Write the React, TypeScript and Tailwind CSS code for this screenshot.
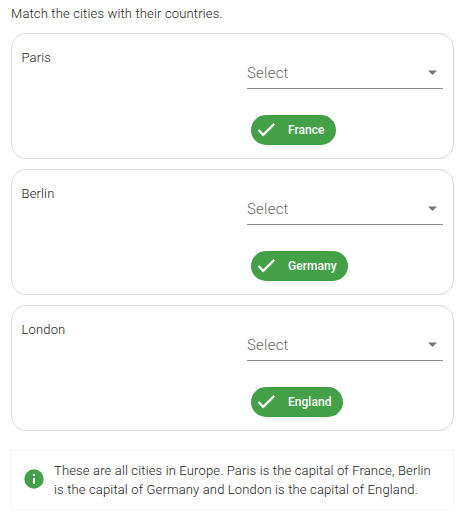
const pairs = [
  { city: "Paris", country: "France", width: "w-[85px]" },
  { city: "Berlin", country: "Germany", width: "w-[97px]" },
  { city: "London", country: "England", width: "w-[92px]" },
];

function MatchCard({ city, country, width }: { city: string; country: string; width: string }) {
  return (
    <section className="flex h-[126px] rounded-[15px] border border-[#dadada] pl-[9.5px] pr-2.5">
      <div className="flex-1 pt-[14px] leading-[19px]">{city}</div>
      <div className="flex w-[196px] flex-col">
        <div className="mt-[21px] flex h-[34px] items-start justify-between border-b border-[#8c8c8c] pr-[6px]">
          <span className="text-[15px] leading-[36px] tracking-[0.22px] text-[#686868]">Select</span>
          <svg className="mt-[15px] h-[5px] w-[9px]" viewBox="0 0 9 5" fill="#757575">
            <path d="M0 .5h9L4.5 5z" />
          </svg>
        </div>
        <div className={`ml-1 mt-[26px] flex h-[30px] items-center rounded-full bg-[#43a047] text-xs font-medium tracking-[0.03px] text-white ${width}`}>
          <svg className="mb-px ml-[4px] size-[23px] shrink-0" viewBox="0 0 24 24" fill="white" stroke="white" strokeWidth="0.5">
            <path d="M8.6 16.17 4.43 12l-1.42 1.41L8.6 19 20.6 7l-1.41-1.41z" />
          </svg>
          <span className="ml-[10px]">{country}</span>
        </div>
      </div>
    </section>
  );
}

export default function App() {
  return (
    <main className="h-[524px] w-[461px] bg-white pl-[11px] pr-[7px] font-['Roboto',sans-serif] text-[13px] font-light tracking-[0.155px] text-[#1a1a1a]">
      <p className="h-[33px] pt-1 leading-[19px]">Match the cities with their countries.</p>
      <div className="flex flex-col gap-2.5">
        {pairs.map((pair) => (
          <MatchCard key={pair.city} {...pair} />
        ))}
      </div>
      <aside className="mt-[19px] flex h-[60px] items-center border border-dotted border-[#ececec] pl-3">
        <svg className="mb-[2px] size-5 shrink-0" viewBox="0 0 20 20">
          <circle cx="10" cy="10" r="9.7" fill="#43a047" />
          <path d="M9 5h2v2H9zM9 9h2v6H9z" fill="white" />
        </svg>
        <p className="mb-px ml-[10px] whitespace-nowrap leading-[19px]">
          These are all cities in Europe. Paris is the capital of France, Berlin
          <br />
          is the capital of Germany and London is the capital of England.
        </p>
      </aside>
    </main>
  );
}
